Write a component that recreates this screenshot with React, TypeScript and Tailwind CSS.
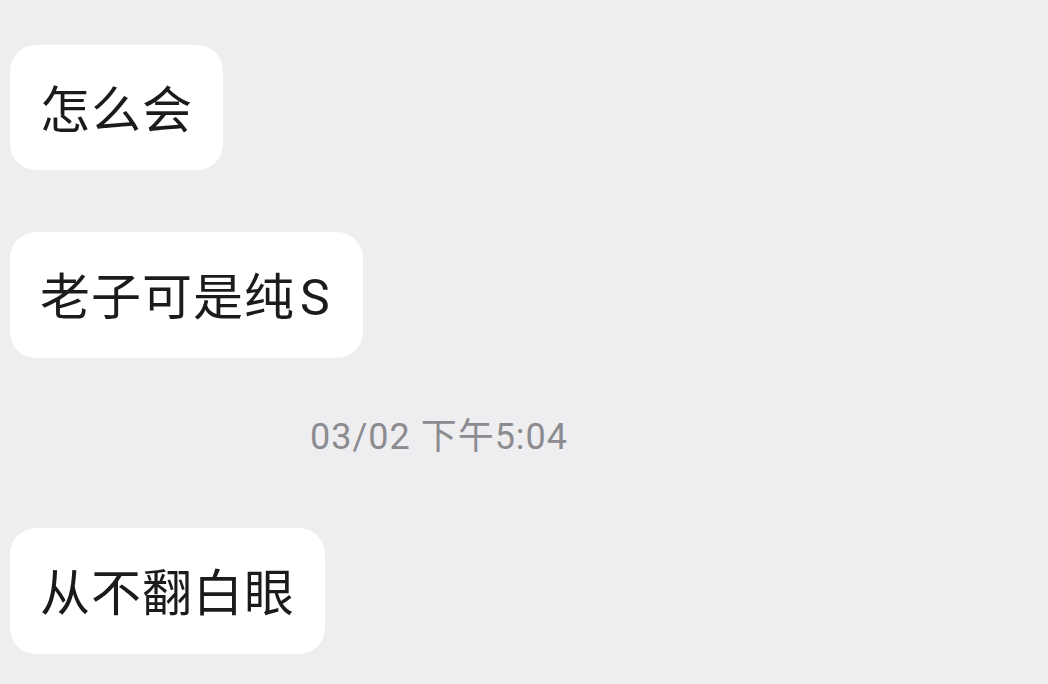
export default function App() {
  const font = { fontFamily: 'Roboto, "Noto Sans CJK SC", "Noto Sans", sans-serif' };
  return (
    <div
      className="w-[1048px] h-[684px] overflow-hidden bg-[#eeeef1] px-[10px] pt-[45px] flex flex-col items-start"
      style={font}
    >
      {/* first message */}
      <div className="bg-white rounded-[26px] h-[125px] px-[30px] pt-[6px] flex items-center text-[50px] leading-none tracking-[1px] text-[#1b1b1b]">
        怎么会
      </div>

      <div className="mt-[62px] bg-white rounded-[26px] h-[126px] pl-[30px] pr-[32px] pt-[6px] flex items-center text-[50px] leading-none tracking-[1px] text-[#1b1b1b]">
        老子可是纯<span className="ml-[5px]">S</span>
      </div>

      {/* timestamp */}
      <div className="mt-[54px] w-[858px] h-[50px] flex items-center justify-center text-[36px] leading-none tracking-[1px] text-[#8c8c90]">
        03/02 下午5:04
      </div>

      <div className="mt-[66px] bg-white rounded-[26px] h-[126px] px-[30px] pt-[6px] flex items-center text-[50px] leading-none tracking-[1px] text-[#1b1b1b]">
        从不翻白眼
      </div>
    </div>
  );
}
